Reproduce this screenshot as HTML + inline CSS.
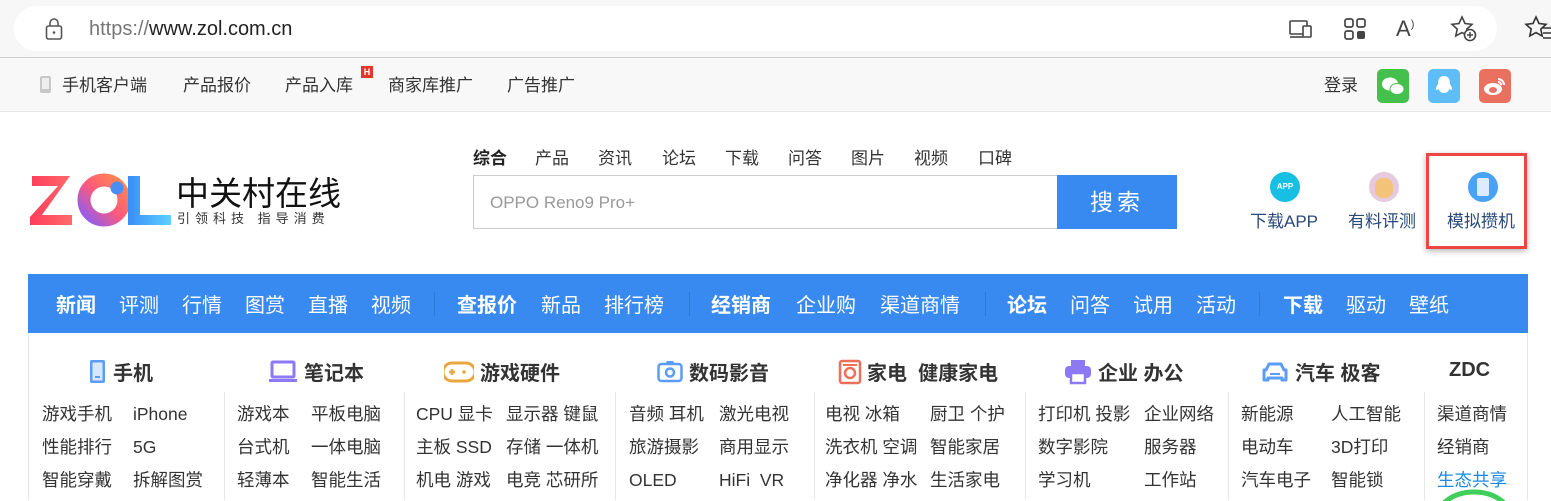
<!DOCTYPE html>
<html><head><meta charset="utf-8">
<style>
*{margin:0;padding:0;box-sizing:border-box}
html,body{width:1551px;height:501px;overflow:hidden}
body{background:#fff;font-family:"Liberation Sans","Noto Sans CJK SC",sans-serif;position:relative;color:#333}
.a{position:absolute;white-space:nowrap}
.chrome{left:0;top:0;width:1551px;height:58px;background:#f7f7f7;border-bottom:1px solid #cfcfcf}
.url{left:14px;top:6px;width:1483px;height:45px;background:#fff;border-radius:23px}
.topnav{left:0;top:58px;width:1551px;height:54px;background:#f8f8f8;border-bottom:1px solid #e6e6e6}
.tn{top:71px;font-size:17px;color:#333}
.sico{top:69px;width:32px;height:34px;border-radius:5px}
.tab{top:144px;font-size:17px;color:#333}
.nav{left:28px;top:274px;width:1500px;height:59px;background:#3889f0}
.nv{top:289px;font-size:20px;color:#fff}
.nv b{font-weight:bold}
.sep{top:292px;width:1px;height:24px;background:#2f78d8}
.hd{top:357px;font-size:20px;font-weight:bold;color:#333}
.it{font-size:17.5px;color:#333;line-height:33px;height:99px;overflow:hidden}
.vl{top:392px;width:1px;height:108px;background:#e8e8e8}
</style></head><body>
<div class="a chrome"></div>
<div class="a url"></div>
<svg class="a" style="left:44px;top:17px" width="20" height="24" viewBox="0 0 20 24"><rect x="2.5" y="9" width="15" height="13" rx="2" fill="none" stroke="#555" stroke-width="1.6"/><path d="M6 9V6a4 4 0 0 1 8 0v3" fill="none" stroke="#555" stroke-width="1.6"/><circle cx="10" cy="15.5" r="1.3" fill="#555"/></svg>
<div class="a" style="left:89px;top:18px;font-size:20px;color:#777">https://<span style="color:#222">www.zol.com.cn</span></div>
<svg class="a" style="left:1288px;top:18px" width="26" height="22"><rect x="2" y="3" width="17" height="13" rx="1" fill="none" stroke="#444" stroke-width="1.6"/><rect x="15" y="8" width="8" height="11" rx="1" fill="#fff" stroke="#444" stroke-width="1.6"/><path d="M2 19h13" stroke="#444" stroke-width="1.6"/></svg>
<svg class="a" style="left:1343px;top:17px" width="24" height="24"><rect x="2" y="2" width="8" height="8" rx="2" fill="none" stroke="#444" stroke-width="1.7"/><rect x="14" y="2" width="8" height="8" rx="2" fill="none" stroke="#444" stroke-width="1.7"/><rect x="2" y="14" width="8" height="8" rx="2" fill="none" stroke="#444" stroke-width="1.7"/><rect x="14" y="14" width="8" height="8" rx="2" fill="#444"/></svg>
<div class="a" style="left:1396px;top:16px;font-size:22px;color:#444">A<sup style="font-size:11px">)</sup></div>
<svg class="a" style="left:1449px;top:14px" width="30" height="30"><path d="M13 3l3 6.5 7 .8-5.2 4.8 1.4 7L13 18.6 6.8 22l1.4-7L3 10.3l7-.8z" fill="none" stroke="#444" stroke-width="1.6"/><circle cx="21" cy="21" r="5.5" fill="#fff" stroke="#444" stroke-width="1.6"/><path d="M21 18v6M18 21h6" stroke="#444" stroke-width="1.5"/></svg>
<svg class="a" style="left:1523px;top:14px" width="28" height="30"><path d="M13 3l3 6.5 7 .8-5.2 4.8 1.4 7L13 18.6 6.8 22l1.4-7L3 10.3l7-.8z" fill="none" stroke="#333" stroke-width="1.6"/><path d="M20 14h8M20 19h8M20 24h8" stroke="#333" stroke-width="1.6"/></svg>

<div class="a topnav"></div>
<svg class="a" style="left:39px;top:75px" width="13" height="19"><rect x="1" y="1" width="11" height="17" rx="2" fill="#c8c8c8"/><rect x="3" y="3" width="7" height="11" fill="#eee"/></svg>
<div class="a tn" style="left:62px">手机客户端</div>
<div class="a tn" style="left:183px">产品报价</div>
<div class="a tn" style="left:285px">产品入库</div>
<div class="a" style="left:361px;top:66px;width:12px;height:12px;background:#e8342f;color:#fff;font-size:9px;font-weight:bold;text-align:center;line-height:12px">H</div>
<div class="a tn" style="left:388px">商家库推广</div>
<div class="a tn" style="left:507px">广告推广</div>
<div class="a tn" style="left:1324px">登录</div>
<div class="a sico" style="left:1377px;background:#46c04c"><svg width="32" height="34"><ellipse cx="13" cy="15" rx="8" ry="6.5" fill="#fff"/><ellipse cx="20" cy="20" rx="7" ry="5.5" fill="#fff" stroke="#46c04c" stroke-width="1"/></svg></div>
<div class="a sico" style="left:1428px;background:#5ebcf7"><svg width="32" height="34"><path d="M16 7c-5 0-6 4-6 8-2 3-3 6-1 6l2-1c0 2 2 4 5 4s5-2 5-4l2 1c2 0 1-3-1-6 0-4-1-8-6-8z" fill="#fff"/></svg></div>
<div class="a sico" style="left:1479px;background:#ea7060"><svg width="32" height="34"><ellipse cx="14" cy="20" rx="9" ry="6" fill="#fff"/><ellipse cx="14" cy="21" rx="4" ry="3" fill="#ea7060"/><path d="M19 10a6 6 0 0 1 6 6M19 13a3 3 0 0 1 3 3" stroke="#fff" stroke-width="2" fill="none"/></svg></div>

<svg class="a" style="left:28px;top:173px" width="146" height="54" viewBox="0 0 146 54">
<defs><linearGradient id="gz" x1="0" x2="1"><stop offset="0" stop-color="#ff3c5a"/><stop offset="1" stop-color="#ff6b6b"/></linearGradient>
<linearGradient id="go" x1="0" y1="1" x2="1" y2="0"><stop offset="0" stop-color="#8b5cf6"/><stop offset=".5" stop-color="#ff5a7a"/><stop offset="1" stop-color="#ff8a50"/></linearGradient>
<linearGradient id="gl" x1="0" x2="1"><stop offset="0" stop-color="#3a8ef8"/><stop offset="1" stop-color="#5dd0ff"/></linearGradient></defs>
<path d="M4 3h38L14 42h30v10H2V44L30 13H4z" fill="url(#gz)"/>
<circle cx="76" cy="27" r="20" fill="none" stroke="url(#go)" stroke-width="13"/>
<circle cx="89" cy="15" r="6.5" fill="#4a8ef5"/>
<path d="M100 3h12v39h31v10h-43z" fill="url(#gl)"/>
</svg>
<div class="a" style="left:176px;top:167px;font-size:33px;color:#111">中关村在线</div>
<div class="a" style="left:177px;top:208px;font-size:13px;color:#333;letter-spacing:5px">引领科技 指导消费</div>

<div class="a tab" style="left:473px;font-weight:bold;color:#222">综合</div>
<div class="a tab" style="left:535px">产品</div>
<div class="a tab" style="left:598px">资讯</div>
<div class="a tab" style="left:662px">论坛</div>
<div class="a tab" style="left:725px">下载</div>
<div class="a tab" style="left:788px">问答</div>
<div class="a tab" style="left:851px">图片</div>
<div class="a tab" style="left:914px">视频</div>
<div class="a tab" style="left:978px">口碑</div>
<div class="a" style="left:473px;top:175px;width:585px;height:54px;border:1px solid #ccc;background:#fff"></div>
<div class="a" style="left:490px;top:193px;font-size:17px;color:#999">OPPO Reno9 Pro+</div>
<div class="a" style="left:1057px;top:175px;width:120px;height:54px;background:#3889f0;color:#fff;font-size:23px;text-align:center;line-height:54px;letter-spacing:4px">搜索</div>

<div class="a" style="left:1270px;top:172px;width:30px;height:30px;border-radius:50%;background:#17c0e3;color:#fff;font-size:8px;font-weight:bold;text-align:center;line-height:30px">APP</div>
<div class="a" style="left:1250px;top:207px;font-size:17px;color:#2a4a7a">下载APP</div>
<div class="a" style="left:1369px;top:172px;width:30px;height:30px;border-radius:50%;background:#e6c9dc"><div style="margin:6px auto;width:18px;height:20px;border-radius:8px;background:#f3c37a"></div></div>
<div class="a" style="left:1348px;top:207px;font-size:17px;color:#2a4a7a">有料评测</div>
<div class="a" style="left:1426px;top:153px;width:101px;height:96px;border:3px solid #f04545;box-shadow:0 2px 6px rgba(0,0,0,.3)"></div>
<div class="a" style="left:1468px;top:172px;width:30px;height:30px;border-radius:50%;background:#49a2f3"><div style="margin:6px auto;width:12px;height:18px;border-radius:2px;background:#dcebff"></div></div>
<div class="a" style="left:1447px;top:207px;font-size:17px;color:#2a4a7a">模拟攒机</div>

<div class="a nav"></div>
<div class="a nv" style="left:56px"><b>新闻</b></div>
<div class="a nv" style="left:119px">评测</div>
<div class="a nv" style="left:182px">行情</div>
<div class="a nv" style="left:245px">图赏</div>
<div class="a nv" style="left:308px">直播</div>
<div class="a nv" style="left:371px">视频</div>
<div class="a sep" style="left:434px"></div>
<div class="a nv" style="left:457px"><b>查报价</b></div>
<div class="a nv" style="left:541px">新品</div>
<div class="a nv" style="left:604px">排行榜</div>
<div class="a sep" style="left:689px"></div>
<div class="a nv" style="left:711px"><b>经销商</b></div>
<div class="a nv" style="left:796px">企业购</div>
<div class="a nv" style="left:880px">渠道商情</div>
<div class="a sep" style="left:985px"></div>
<div class="a nv" style="left:1007px"><b>论坛</b></div>
<div class="a nv" style="left:1070px">问答</div>
<div class="a nv" style="left:1133px">试用</div>
<div class="a nv" style="left:1196px">活动</div>
<div class="a sep" style="left:1259px"></div>
<div class="a nv" style="left:1283px"><b>下载</b></div>
<div class="a nv" style="left:1346px">驱动</div>
<div class="a nv" style="left:1409px">壁纸</div>

<div class="a" style="left:28px;top:333px;width:1px;height:167px;background:#e6e6e6"></div>
<div class="a" style="left:1527px;top:333px;width:1px;height:167px;background:#e6e6e6"></div>
<div class="a vl" style="left:224px"></div>
<div class="a vl" style="left:404px"></div>
<div class="a vl" style="left:615px"></div>
<div class="a vl" style="left:814px"></div>
<div class="a vl" style="left:1025px"></div>
<div class="a vl" style="left:1228px"></div>
<div class="a vl" style="left:1424px"></div>

<svg class="a" style="left:88px;top:359px" width="20" height="26"><rect x="2" y="1" width="15" height="23" rx="2" fill="#5b9cf7"/><rect x="4.5" y="3.5" width="10" height="18" fill="#d6e7ff"/><rect x="7" y="17" width="5" height="2" fill="#5b9cf7"/></svg>
<div class="a hd" style="left:113px">手机</div>
<svg class="a" style="left:268px;top:360px" width="30" height="24"><rect x="4" y="2" width="22" height="15" rx="1" fill="none" stroke="#8c79f3" stroke-width="3"/><rect x="1" y="19" width="28" height="3" fill="#8c79f3"/></svg>
<div class="a hd" style="left:304px">笔记本</div>
<svg class="a" style="left:444px;top:360px" width="30" height="24"><path d="M8 3h14a7 7 0 0 1 0 18H8A7 7 0 0 1 8 3z" fill="none" stroke="#eaa73d" stroke-width="3"/><path d="M8 9v6M5 12h6" stroke="#eaa73d" stroke-width="2.5"/><circle cx="20" cy="12" r="1.8" fill="#eaa73d"/></svg>
<div class="a hd" style="left:480px">游戏硬件</div>
<svg class="a" style="left:657px;top:359px" width="26" height="24"><rect x="1.5" y="5" width="23" height="17" rx="3" fill="none" stroke="#5b9cf7" stroke-width="2.5"/><path d="M8 5l2-3h6l2 3" fill="#5b9cf7"/><circle cx="13" cy="13.5" r="4" fill="none" stroke="#5b9cf7" stroke-width="2.5"/></svg>
<div class="a hd" style="left:689px">数码影音</div>
<svg class="a" style="left:838px;top:359px" width="24" height="26"><rect x="2" y="2" width="20" height="22" rx="2" fill="none" stroke="#ee6f56" stroke-width="2.5"/><circle cx="12" cy="14" r="5" fill="none" stroke="#ee6f56" stroke-width="2.5"/><path d="M5 6h14" stroke="#ee6f56" stroke-width="2"/></svg>
<div class="a hd" style="left:867px">家电&nbsp; 健康家电</div>
<svg class="a" style="left:1064px;top:359px" width="28" height="26"><rect x="7" y="1" width="14" height="6" fill="#8c79f3"/><rect x="1" y="7" width="26" height="12" rx="4" fill="#8c79f3"/><rect x="7" y="14" width="14" height="10" fill="#fff" stroke="#8c79f3" stroke-width="2.5"/></svg>
<div class="a hd" style="left:1098px">企业 办公</div>
<svg class="a" style="left:1261px;top:361px" width="28" height="22"><path d="M5 9l3-6h12l3 6h2v10h-4v-2H7v2H3V9z" fill="none" stroke="#5b9cf7" stroke-width="3" stroke-linejoin="round"/><path d="M9 13h10" stroke="#5b9cf7" stroke-width="2"/></svg>
<div class="a hd" style="left:1295px">汽车 极客</div>
<div class="a hd" style="left:1449px;top:359px">ZDC</div>

<div class="a it" style="left:42px;top:398px">游戏手机<br>性能排行<br>智能穿戴</div>
<div class="a it" style="left:133px;top:398px">iPhone<br>5G<br>拆解图赏</div>
<div class="a it" style="left:237px;top:398px">游戏本<br>台式机<br>轻薄本</div>
<div class="a it" style="left:311px;top:398px">平板电脑<br>一体电脑<br>智能生活</div>
<div class="a it" style="left:416px;top:398px">CPU 显卡<br>主板 SSD<br>机电 游戏</div>
<div class="a it" style="left:506px;top:398px">显示器 键鼠<br>存储 一体机<br>电竞 芯研所</div>
<div class="a it" style="left:629px;top:398px">音频 耳机<br>旅游摄影<br>OLED</div>
<div class="a it" style="left:719px;top:398px">激光电视<br>商用显示<br>HiFi&nbsp; VR</div>
<div class="a it" style="left:825px;top:398px">电视 冰箱<br>洗衣机 空调<br>净化器 净水</div>
<div class="a it" style="left:930px;top:398px">厨卫 个护<br>智能家居<br>生活家电</div>
<div class="a it" style="left:1038px;top:398px">打印机 投影<br>数字影院<br>学习机</div>
<div class="a it" style="left:1144px;top:398px">企业网络<br>服务器<br>工作站</div>
<div class="a it" style="left:1241px;top:398px">新能源<br>电动车<br>汽车电子</div>
<div class="a it" style="left:1331px;top:398px">人工智能<br>3D打印<br>智能锁</div>
<div class="a it" style="left:1437px;top:398px">渠道商情<br>经销商<br><span style="color:#1a8ae6">生态共享</span></div>
<svg class="a" style="left:1420px;top:480px" width="110" height="21"><ellipse cx="54" cy="40" rx="38" ry="28" fill="#fff" stroke="#3fcf5a" stroke-width="5"/></svg>
</body></html>
